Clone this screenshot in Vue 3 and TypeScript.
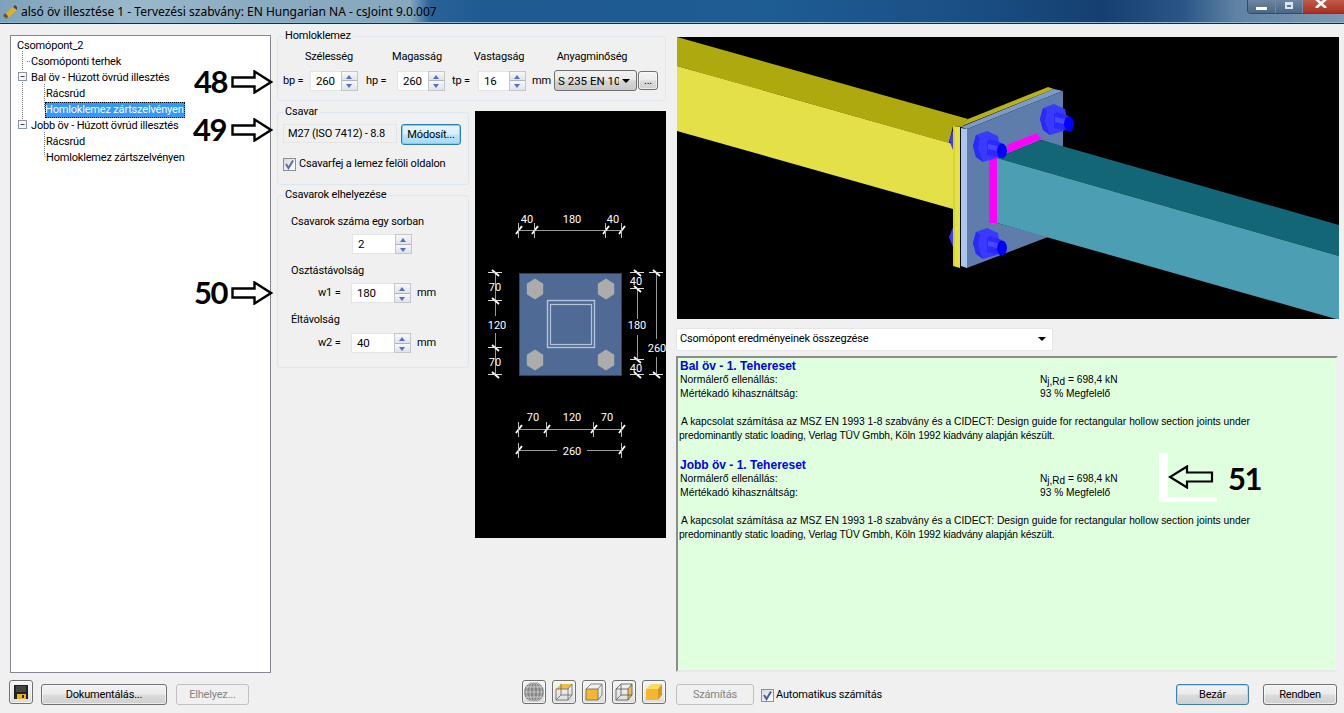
<script setup lang="ts">
const widths = [
  { key: 'bp', label: 'bp =', value: '260' },
  { key: 'hp', label: 'hp =', value: '260' },
  { key: 'tp', label: 'tp =', value: '16' },
]
const treeRows = [
  { text: 'Csomópont_2', cls: 'l0', sel: false },
  { text: 'Csomóponti terhek', cls: 'l1', sel: false },
  { text: 'Bal öv - Húzott övrúd illesztés', cls: 'l1', sel: false },
  { text: 'Rácsrúd', cls: 'l2', sel: false },
  { text: 'Homloklemez zártszelvényen', cls: 'l2', sel: true },
  { text: 'Jobb öv - Húzott övrúd illesztés', cls: 'l1', sel: false },
  { text: 'Rácsrúd', cls: 'l2', sel: false },
  { text: 'Homloklemez zártszelvényen', cls: 'l2', sel: false },
]
const results = ['Bal öv - 1. Tehereset', 'Jobb öv - 1. Tehereset']
const hex = (cx: number, cy: number, r: number) =>
  [0, 1, 2, 3, 4, 5]
    .map((i) => {
      const a = (Math.PI / 3) * i - Math.PI / 2
      return `${(cx + r * 0.9 * Math.cos(a)).toFixed(1)},${(cy + r * Math.sin(a)).toFixed(1)}`
    })
    .join(' ')
const plateBolts = [hex(535, 178, 10.5), hex(606, 178, 10.5), hex(535, 249, 10.5), hex(606, 249, 10.5)]
const bolts3d = [
  { x: 986, y: 146 },
  { x: 1053, y: 119 },
  { x: 986, y: 243 },
]
const ticksH = [
  { y: 119, xs: [519, 535, 606, 622] },
  { y: 318, xs: [519, 547, 594, 622] },
  { y: 339, xs: [519, 622] },
]
const ticksV = [
  { x: 495, ys: [162, 190, 237, 264] },
  { x: 637, ys: [178, 249] },
  { x: 637, ys: [162, 264] },
  { x: 656, ys: [162, 264] },
]
const dimTexts = [
  { x: 527, y: 112, t: '40' },
  { x: 572, y: 112, t: '180' },
  { x: 613, y: 112, t: '40' },
  { x: 533, y: 310, t: '70' },
  { x: 572, y: 310, t: '120' },
  { x: 607, y: 310, t: '70' },
  { x: 495, y: 180, t: '70' },
  { x: 497, y: 218, t: '120' },
  { x: 495, y: 255, t: '70' },
  { x: 636, y: 174, t: '40' },
  { x: 637, y: 218, t: '180' },
  { x: 636, y: 261, t: '40' },
]
</script>

<template>
  <div class="win">
    <header class="title">
      <svg class="app-ico" width="16" height="16" viewBox="0 0 16 16">
        <path d="M1 12 L11 3 L15 6 L5 15 Z" fill="#e0b020" />
        <path d="M1 12 L3 9 L6 12 L5 15 Z" fill="#555" />
        <path d="M11 3 L13 1 L15 3 L15 6 Z" fill="#444" />
      </svg>
      <span class="title-text">alsó öv illesztése 1 - Tervezési szabvány: EN Hungarian NA - csJoint 9.0.007</span>
      <div class="caption">
        <span class="cap cap-min"><i></i></span>
        <span class="cap cap-max"><i></i></span>
        <span class="cap cap-close">
          <svg width="12" height="9" viewBox="0 0 12 9"><path d="M1 0 L11 9 M11 0 L1 9" stroke="#fff" stroke-width="2.6" /></svg>
        </span>
      </div>
    </header>

    <main class="main">
      <nav class="tree">
        <svg class="tree-lines" width="259" height="160" viewBox="0 0 259 160">
          <g stroke="#777" stroke-dasharray="1 1" fill="none">
            <path d="M11.5 15 V35 M11.5 46 V84 M16 25.5 H20 M33.5 48 V72 M33.5 56.5 H35 M33.5 72.5 H35 M33.5 96 V120 M33.5 104.5 H35 M33.5 120.5 H35" />
          </g>
          <g>
            <rect x="7.5" y="36.5" width="8" height="8" fill="#f4f6f8" stroke="#8a97a5" />
            <path d="M9.5 40.5 H13.5" stroke="#445" />
            <rect x="7.5" y="84.5" width="8" height="8" fill="#f4f6f8" stroke="#8a97a5" />
            <path d="M9.5 88.5 H13.5" stroke="#445" />
          </g>
        </svg>
        <div v-for="(r, i) in treeRows" :key="i" class="tree-row" :class="r.cls">
          <span :class="{ sel: r.sel }">{{ r.text }}</span>
        </div>
      </nav>

      <section class="mid">
        <div class="group plate">
          <span class="legend">Homloklemez</span>
          <div class="col-heads">
            <span>Szélesség</span><span>Magasság</span><span>Vastagság</span><span>Anyagminőség</span>
          </div>
          <div class="plate-row">
            <label v-for="w in widths" :key="w.key" class="pfield" :class="'pf-' + w.key">
              <span class="plabel">{{ w.label }}</span>
              <span class="spin">
                <span class="spin-v">{{ w.value }}</span>
                <span class="spin-b"><b class="up"></b><b class="down"></b></span>
              </span>
            </label>
            <span class="mm">mm</span>
            <span class="combo"><span class="combo-t">S 235 EN 100</span><i class="caret"></i></span>
            <button class="btn dots">...</button>
          </div>
        </div>

        <div class="lower">
          <div class="lower-left">
            <div class="group bolt">
              <span class="legend">Csavar</span>
              <div class="bolt-row">
                <span class="readonly">M27 (ISO 7412) - 8.8</span>
                <button class="btn mod">Módosít...</button>
              </div>
              <label class="check bolt-check"><i class="box"><svg width="11" height="11" viewBox="0 0 11 11"><path d="M2 5 L4.5 9 L9 1.5" fill="none" stroke="#5a6fa8" stroke-width="2" /></svg></i>Csavarfej a lemez felöli oldalon</label>
            </div>

            <div class="group place">
              <span class="legend">Csavarok elhelyezése</span>
              <div class="place-h">Csavarok száma egy sorban</div>
              <div class="place-f first">
                <span class="spin wide"><span class="spin-v">2</span><span class="spin-b"><b class="up"></b><b class="down"></b></span></span>
              </div>
              <div class="place-h">Osztástávolság</div>
              <div class="place-f">
                <span class="wl">w1 =</span>
                <span class="spin wide"><span class="spin-v">180</span><span class="spin-b"><b class="up"></b><b class="down"></b></span></span>
                <span class="wm">mm</span>
              </div>
              <div class="place-h">Éltávolság</div>
              <div class="place-f last">
                <span class="wl">w2 =</span>
                <span class="spin wide"><span class="spin-v">40</span><span class="spin-b"><b class="up"></b><b class="down"></b></span></span>
                <span class="wm">mm</span>
              </div>
            </div>
          </div>

          <svg class="drawing" width="191" height="427" viewBox="475 0 191 427">
            <rect x="519.5" y="162.5" width="102" height="102" fill="#4f6a95" stroke="#2c4468" />
            <polygon v-for="(p, i) in plateBolts" :key="i" :points="p" fill="#acacac" />
            <rect x="547.5" y="189.5" width="47" height="47" fill="none" stroke="#b4c4dc" stroke-width="1.4" />
            <rect x="550.5" y="193.5" width="41" height="40" fill="none" stroke="#b4c4dc" stroke-width="1.2" />
            <g stroke="#9a9a9a" fill="none">
              <path d="M519 119.5 H622 M519 318.5 H622 M519 339.5 H557 M587 339.5 H622" />
              <path d="M495.5 162 V205 M495.5 222 V264 M637.5 178 V208 M637.5 224 V249 M656.5 162 V228 M656.5 246 V264" />
            </g>
            <g stroke="#fff" fill="none" stroke-width="1.2">
              <template v-for="(t, i) in ticksH" :key="'h' + i">
                <g v-for="x in t.xs" :key="x">
                  <path :d="`M${x - 3} ${t.y + 4} L${x + 3} ${t.y - 4}`" stroke-width="1.8" />
                  <path :d="`M${x - 0.5} ${t.y - 7} V${t.y + 8}`" stroke="#bbb" stroke-width="1" />
                </g>
              </template>
              <template v-for="(t, i) in ticksV" :key="'v' + i">
                <g v-for="y in t.ys" :key="y">
                  <path :d="`M${t.x - 3} ${y - 3} L${t.x + 4} ${y + 3}`" stroke-width="1.8" />
                  <path :d="`M${t.x - 7} ${y - 0.5} H${t.x + 7}`" stroke="#ddd" stroke-width="1" />
                </g>
              </template>
            </g>
            <g class="dim">
              <text v-for="(d, i) in dimTexts" :key="i" :x="d.x" :y="d.y">{{ d.t }}</text>
              <text x="572" y="344">260</text>
              <text x="657" y="241">260</text>
            </g>
          </svg>
        </div>
      </section>

      <section class="right">
        <svg class="view" width="662" height="282" viewBox="677 37 662 282">
          <rect x="677" y="37" width="662" height="282" fill="#000" />
          <polygon points="677,37 968,119 962,127 953,126 949,143 677,66" fill="#aea90f" />
          <polygon points="677,66 953,144 953,209 677,131" fill="#e4e148" />
          <polygon points="949,140 953,130 953,150" fill="#3a3aff" />
          <polygon points="949,237 953,227 953,247" fill="#3a3aff" />
          <polygon points="953,126 960,127 960,268 953,266" fill="#e6e23c" />
          <path d="M954 127 V266" stroke="#c7c42a" />
          <polygon points="968,119 1048,87 1054,89 962,126" fill="#b6b01a" />
          <polygon points="961,127 1054,89 1063,91 967,129" fill="#7d9bc8" />
          <polygon points="967,129 1063,91 1063,147 1041,140 997,158 997,223 1048,237 967,268" fill="#5f7daa" />
          <polygon points="961,128 967,129 967,268 961,266" fill="#a9c6ef" />
          <polygon points="1007,145 1037,133 1041,139 1008,153" fill="#ff00ff" />
          <rect x="989" y="158" width="8" height="65" fill="#ff00ff" />
          <polygon points="1041,140 1339,225 1339,256 997,158" fill="#136676" />
          <polygon points="997,158 1339,256 1339,319 1336,319 997,223" fill="#4c9fb2" />
          <g v-for="b in bolts3d" :key="b.x + '-' + b.y">
            <polygon :points="`${b.x - 13},${b.y} ${b.x - 10},${b.y - 11} ${b.x + 1},${b.y - 15} ${b.x + 12},${b.y - 10} ${b.x + 14},${b.y + 1} ${b.x + 11},${b.y + 12} ${b.x - 3},${b.y + 16} ${b.x - 10},${b.y + 11}`" fill="#3a3aff" />
            <polygon :points="`${b.x - 13},${b.y} ${b.x - 10},${b.y - 11} ${b.x - 6},${b.y - 8} ${b.x - 8},${b.y + 2} ${b.x - 3},${b.y + 16} ${b.x - 10},${b.y + 11}`" fill="#2a2af6" />
            <polygon :points="`${b.x + 1},${b.y - 5} ${b.x + 4},${b.y - 7} ${b.x + 16},${b.y - 3} ${b.x + 16},${b.y + 12} ${b.x + 1},${b.y + 9}`" fill="#2a2aff" />
            <polygon :points="`${b.x + 2},${b.y - 2} ${b.x + 16},${b.y + 1} ${b.x + 16},${b.y + 6} ${b.x + 2},${b.y + 3}`" fill="#4848ff" />
            <ellipse :cx="b.x + 16" :cy="b.y + 5" rx="5" ry="7.5" fill="#0000ff" />
          </g>
        </svg>

        <div class="select">
          <span>Csomópont eredményeinek összegzése</span>
          <i class="caret"></i>
        </div>

        <article class="results">
          <div v-for="(r, i) in results" :key="i" class="res-block">
            <h3>{{ r }}</h3>
            <div class="res-line">
              <span>Normálerő ellenállás:</span>
              <span class="res-v">N<sub>j,Rd</sub> = 698,4 kN</span>
            </div>
            <div class="res-line">
              <span>Mértékadó kihasználtság:</span>
              <span class="res-v">93 % Megfelelő</span>
            </div>
            <p>
              <span class="first-line">A kapcsolat számítása az MSZ EN 1993 1-8 szabvány és a CIDECT: Design guide for rectangular hollow section joints under</span><br /><span class="second-line">predominantly static loading, Verlag TÜV Gmbh, Köln 1992 kiadvány alapján készült.</span>
            </p>
          </div>
        </article>
      </section>
    </main>

    <footer class="foot">
      <button class="btn save" aria-label="Mentés">
        <svg width="16" height="16" viewBox="0 0 16 16">
          <path d="M1 1 H15 V15 H1 Z" fill="#222" />
          <rect x="3" y="2" width="10" height="6" fill="#444" />
          <rect x="4" y="10" width="9" height="5" fill="#f0b420" />
          <rect x="9" y="11" width="2" height="3" fill="#222" />
        </svg>
      </button>
      <button class="btn doc">Dokumentálás...</button>
      <button class="btn off place-btn">Elhelyez...</button>

      <div class="icons">
        <button class="btn ico" aria-label="Gömb">
          <svg width="20" height="20" viewBox="0 0 20 20">
            <circle cx="10" cy="10" r="10" fill="#858585" />
            <g fill="none" stroke="#ddd" stroke-width=".7">
              <ellipse cx="10" cy="10" rx="4" ry="10" /><ellipse cx="10" cy="10" rx="7.5" ry="10" />
              <path d="M10 0 V20 M2 5 H18 M0 10 H20 M2 15 H18" />
            </g>
          </svg>
        </button>
        <button class="btn ico" aria-label="Felül">
          <svg width="18" height="18" viewBox="0 0 18 18">
            <polygon points="1,6 6,1 17,1 13,6" fill="#f2c040" />
            <path d="M1 6 H13 V17 H1 Z M13 6 L17 1 V12 L13 17 M1 17 L6 12 H17 M6 1 V12" fill="none" stroke="#666" stroke-width=".8" />
          </svg>
        </button>
        <button class="btn ico" aria-label="Elöl">
          <svg width="18" height="18" viewBox="0 0 18 18">
            <rect x="1" y="6" width="12" height="11" fill="#f4b82c" />
            <path d="M1 6 L6 1 H17 V12 L13 17 M13 6 L17 1 M1 6 H13 V17 H1 Z" fill="none" stroke="#666" stroke-width=".8" />
          </svg>
        </button>
        <button class="btn ico" aria-label="Oldal">
          <svg width="18" height="18" viewBox="0 0 18 18">
            <polygon points="13,6 17,1 17,12 13,17" fill="#f2c040" />
            <path d="M1 6 H13 V17 H1 Z M1 6 L6 1 H17 V12 L13 17 M13 6 L17 1 M1 17 L6 12 H17 M6 1 V12" fill="none" stroke="#555" stroke-width=".8" />
          </svg>
        </button>
        <button class="btn ico" aria-label="Teli">
          <svg width="18" height="18" viewBox="0 0 18 18">
            <polygon points="1,6 6,1 17,1 13,6" fill="#f8d868" />
            <rect x="1" y="6" width="12" height="11" fill="#f4b82c" />
            <polygon points="13,6 17,1 17,12 13,17" fill="#d99a18" />
          </svg>
        </button>
      </div>

      <button class="btn off calc">Számítás</button>
      <label class="check auto"><i class="box"><svg width="11" height="11" viewBox="0 0 11 11"><path d="M2 5 L4.5 9 L9 1.5" fill="none" stroke="#4a5fa0" stroke-width="2" /></svg></i>Automatikus számítás</label>
      <span class="spacer"></span>
      <button class="btn close-btn">Bezár</button>
      <button class="btn ok">Rendben</button>
    </footer>

    <!-- Annotations pasted over the dialog -->
    <div class="note n48">48</div>
    <svg class="arrow a48" width="42" height="24" viewBox="0 0 42 24"><path d="M1.5 7.5 H23.5 V1.5 L40 12 L23.5 22.5 V16.5 H1.5 Z" fill="#fff" stroke="#000" stroke-width="2.4" /></svg>
    <div class="note n49">49</div>
    <svg class="arrow a49" width="42" height="24" viewBox="0 0 42 24"><path d="M1.5 7.5 H23.5 V1.5 L40 12 L23.5 22.5 V16.5 H1.5 Z" fill="#fff" stroke="#000" stroke-width="2.4" /></svg>
    <div class="note n50">50</div>
    <svg class="arrow a50" width="42" height="24" viewBox="0 0 42 24"><path d="M1.5 7.5 H23.5 V1.5 L40 12 L23.5 22.5 V16.5 H1.5 Z" fill="#fff" stroke="#000" stroke-width="2.4" /></svg>
    <div class="paste-l"></div>
    <svg class="arrow a51" width="46" height="24" viewBox="0 0 46 24"><path d="M44 7.5 H19 V1.5 L2 12 L19 22.5 V16.5 H44 Z" fill="#dfffdf" stroke="#000" stroke-width="2.2" /></svg>
    <div class="note n51">51</div>
  </div>
</template>

<style>
html, body { margin: 0; background: #f0f0f0; }
</style>

<style scoped>
.win {
  position: relative;
  width: 1344px;
  height: 713px;
  overflow: hidden;
  display: flex;
  flex-direction: column;
  background: #f0f0f0;
  color: #000;
  font: 11px/14px Roboto, Tahoma, sans-serif;
  letter-spacing: -.18px;
}
button { font: inherit; color: inherit; padding: 0; margin: 0; letter-spacing: inherit; }

.title {
  height: 23px;
  flex: none;
  display: flex;
  align-items: center;
  position: relative;
  box-sizing: content-box;
  border-bottom: 1px solid #1c2a3a;
  box-shadow: inset 0 -1px 0 #8fb8d2;
  background:
    linear-gradient(90deg, #7fa2ba 0, #9ab8ca 10%, #8aaac0 20%, #88a8be 30.5%, #2a6298 32%, #1f5a90 36%, #1e5c94 57%, #1a4f84 72%, #153f70 82%, #2a5585 88%, #5f83a4 92%, #8098b0 100%);
}
.app-ico { margin: 0 3px 0 2px; }
.title-text {
  font: 12px/16px "Noto Sans", Tahoma, sans-serif;
  letter-spacing: 0;
  color: #000;
  white-space: nowrap;
}
.caption {
  position: absolute;
  right: 0;
  top: 0;
  height: 13px;
  display: flex;
  gap: 1px;
  border-left: 1px solid #3a4a5c;
  border-bottom: 1px solid #3a4a5c;
  border-radius: 0 0 0 4px;
  overflow: hidden;
}
.cap {
  display: flex;
  align-items: center;
  justify-content: center;
  height: 13px;
  background: linear-gradient(180deg, #6d87a2, #4a6684);
}
.cap-min { width: 27px; }
.cap-min i { width: 11px; height: 3px; background: #fff; margin-top: 3px; }
.cap-max { width: 26px; }
.cap-max i { width: 8px; height: 7px; border: 2px solid #dde4f0; box-sizing: border-box; border-top-width: 3px; margin-top: -3px; }
.cap-close { width: 41px; padding-right: 6px; box-sizing: border-box; background: linear-gradient(180deg, #c25a4c, #a83020); }
.cap-close svg { margin-top: -6px; }

.main {
  flex: none;
  height: 649px;
  display: flex;
  padding: 11px 0 0 10px;
  box-sizing: border-box;
}

.tree {
  position: relative;
  width: 261px;
  height: 638px;
  box-sizing: border-box;
  flex: none;
  background: #fff;
  border: 1px solid #828790;
  padding: 2px 0 0 0;
}
.tree-lines { position: absolute; left: 0; top: 0; }
.tree-row { height: 16px; line-height: 16px; position: relative; white-space: nowrap; }
.l0 { padding-left: 6px; }
.l1 { padding-left: 20px; }
.l2 { padding-left: 35px; }
.sel { display: inline-block; background: #3399ff; color: #fff; outline: 1px dotted #000; outline-offset: -1px; padding: 0 1px 0 0; height: 16px; margin-left: -1px; }

.mid { width: 389px; margin-left: 6px; flex: none; padding-top: 1px; }
.group {
  position: relative;
  box-sizing: border-box;
  border: 1px solid #dde6ee;
  border-radius: 3px;
}
.legend {
  position: absolute;
  left: 5px;
  top: -8px;
  padding: 0 2px;
  background: #f0f0f0;
  white-space: nowrap;
}
.plate { height: 65px; }
.col-heads {
  display: grid;
  grid-template-columns: 88px 88px 76px 110px;
  padding: 13px 0 0 7px;
  text-align: center;
}
.plate-row { display: flex; align-items: center; padding-left: 5px; margin-top: 6px; height: 21px; }
.pfield { display: flex; align-items: center; }
.plabel { width: 27px; }
.pf-hp { margin-left: 8px; }
.pf-hp .plabel { width: 31px; }
.pf-tp { margin-left: 7px; }
.pf-tp .plabel { width: 26px; }
.spin {
  width: 48px;
  height: 20px;
  display: flex;
  box-sizing: border-box;
  background: #fff;
  border: 1px solid #e2e5e8;
  border-right: 0;
}
.spin.wide { width: 60px; }
.spin-v { flex: 1; padding-left: 5px; line-height: 18px; font-size: 11.5px; }
.spin-b {
  width: 17px;
  flex: none;
  display: flex;
  flex-direction: column;
  border: 1px solid #c4c8cc;
  box-sizing: border-box;
  margin-top: -1px;
  height: 20px;
  background: #f3f3f3;
}
.spin-b b { flex: 1; position: relative; display: block; background: linear-gradient(180deg, #f8f8f8, #dfe3ea); }
.spin-b b + b { border-top: 1px solid #aeb4ba; }
.spin-b b::after {
  content: "";
  position: absolute;
  left: 4px;
  top: 3px;
  border-left: 3.5px solid transparent;
  border-right: 3.5px solid transparent;
}
.spin-b .up::after { border-bottom: 4px solid #5870b8; }
.spin-b .down::after { border-top: 4px solid #5870b8; }
.mm { margin-left: 6px; width: 22px; }
.combo {
  width: 83px;
  height: 21px;
  box-sizing: border-box;
  display: flex;
  align-items: center;
  border: 1px solid #6f6f6f;
  border-radius: 3px;
  background: linear-gradient(180deg, #f2f2f2 0, #e8e8e8 48%, #d4d4d4 52%, #cacaca 100%);
  padding-left: 3px;
  position: relative;
}
.combo-t { width: 61px; overflow: hidden; white-space: nowrap; font-size: 11.5px; letter-spacing: 0; }
.caret {
  position: absolute;
  right: 6px;
  top: 8px;
  border-left: 4px solid transparent;
  border-right: 4px solid transparent;
  border-top: 4px solid #000;
}
.btn {
  box-sizing: border-box;
  border: 1px solid #707070;
  border-radius: 3px;
  background: linear-gradient(180deg, #f3f3f3 0, #ebebeb 48%, #dcdcdc 52%, #cfcfcf 100%);
  box-shadow: inset 0 0 0 1px rgba(255, 255, 255, .6);
}
.dots { width: 20px; height: 19px; margin-left: 1px; line-height: 12px; }

.lower { display: flex; gap: 6px; margin-top: 10px; }
.lower-left { width: 192px; flex: none; }
.bolt { height: 73px; margin-top: 1px; }
.bolt-row { display: flex; padding: 11px 0 0 5px; }
.readonly {
  width: 114px;
  height: 19px;
  box-sizing: border-box;
  border: 1px solid #e4e4e4;
  padding-left: 4px;
  line-height: 17px;
  white-space: nowrap;
}
.mod {
  width: 60px;
  height: 21px;
  margin-left: 4px;
  border: 1px solid #2c7fb0;
  background: linear-gradient(180deg, #e6f5fc 0, #d8effa 48%, #bde4f7 52%, #a6d9f4 100%);
  box-shadow: inset 0 0 0 1px #7fd0f0;
}
.check { display: flex; align-items: center; white-space: nowrap; }
.box {
  width: 13px;
  height: 13px;
  box-sizing: border-box;
  border: 1px solid #8e8f8f;
  background: linear-gradient(135deg, #d8d8d8, #fff);
  display: flex;
  align-items: center;
  justify-content: center;
  margin-right: 3px;
}
.bolt-check { margin: 12px 0 0 5px; }

.place { height: 173px; margin-top: 10px; padding: 19px 0 0 13px; }
.place-h { height: 14px; }
.place-f { display: flex; align-items: center; height: 20px; margin: 5px 0 10px 0; }
.place-f.first { padding-left: 61px; }
.place-f.last { margin-top: 6px; }
.wl { width: 33px; margin-left: 27px; }
.wm { margin-left: 6px; }
.drawing { display: block; background: #000; flex: none; }
.dim text { fill: #fff; font: 11px Roboto, Tahoma, sans-serif; letter-spacing: 0; text-anchor: middle; }

.right { width: 663px; margin-left: 10px; flex: none; }
.view { display: block; margin: 2px 0 0 1px; }
.select {
  position: relative;
  width: 377px;
  height: 23px;
  box-sizing: border-box;
  margin-top: 9px;
  background: #fff;
  border: 1px solid #e6e6e6;
  border-radius: 2px;
  padding: 3px 0 0 3px;
}
.results {
  width: 662px;
  height: 316px;
  box-sizing: border-box;
  margin-top: 5px;
  background: #dfffdf;
  border: 2px solid #8c8c8c;
  border-right-color: #f0f0f0;
  border-bottom-color: #e8e8e8;
  padding: 1px 0 0 2px;
  font: 10.4px/14px "Liberation Sans", Arial, sans-serif;
  letter-spacing: 0;
  overflow: hidden;
}
.res-block { height: 99px; }
.results h3 { margin: 0; font: bold 12px/14px "Liberation Sans", Arial, sans-serif; color: #0000ee; }
.res-line { display: flex; height: 14px; }
.res-line > span:first-child { width: 360px; }
.res-v { font-size: 10.2px; }
.res-v sub { font-size: 10px; line-height: 0; vertical-align: -2px; }
.results p { margin: 14px 0 0 -1px; white-space: nowrap; font-size: 10.3px; }
.first-line { padding-left: 2px; }
.second-line { letter-spacing: -.13px; }

.foot {
  flex: 1;
  display: flex;
  align-items: flex-start;
  padding: 7px 0 0 9px;
  position: relative;
}
.save { width: 24px; height: 24px; display: flex; align-items: center; justify-content: center; background: linear-gradient(180deg, #f6f6f6, #dcdcdc); }
.doc { width: 126px; height: 21px; margin: 4px 0 0 8px; }
.off {
  background: #f0f0f0;
  border-color: #c0c0c0;
  color: #838383;
  box-shadow: none;
}
.place-btn { width: 73px; height: 21px; margin: 4px 0 0 9px; }
.icons { display: flex; gap: 6px; margin-left: 273px; }
.ico { width: 24px; height: 24px; display: flex; align-items: center; justify-content: center; background: linear-gradient(180deg, #f6f6f6, #dcdcdc); }
.calc { width: 78px; height: 21px; margin: 4px 0 0 10px; }
.auto { margin: 8px 0 0 7px; }
.auto .box { margin-right: 2px; }
.spacer { flex: 1; }
.close-btn {
  width: 73px;
  height: 21px;
  margin-top: 4px;
  border-color: #3c7fb1;
  box-shadow: inset 0 0 0 1px #a8e0f4;
}
.ok { width: 74px; height: 21px; margin: 4px 7px 0 14px; }

.note {
  position: absolute;
  font: bold 31px/31px Lato, "Noto Sans", sans-serif;
  letter-spacing: -1.5px;
  color: #000;
}
.n48 { left: 194px; top: 66px; }
.n49 { left: 193px; top: 114px; }
.n50 { left: 194px; top: 277px; }
.n51 { left: 1228px; top: 463px; }
.arrow { position: absolute; }
.a48 { left: 231px; top: 70px; }
.a49 { left: 231px; top: 118px; }
.a50 { left: 231px; top: 281px; }
.a51 { left: 1168px; top: 465px; }
.paste-l {
  position: absolute;
  left: 1159px;
  top: 453px;
  width: 49px;
  height: 44px;
  border-left: 9px solid #fff;
  border-bottom: 5px solid #fff;
}
</style>
